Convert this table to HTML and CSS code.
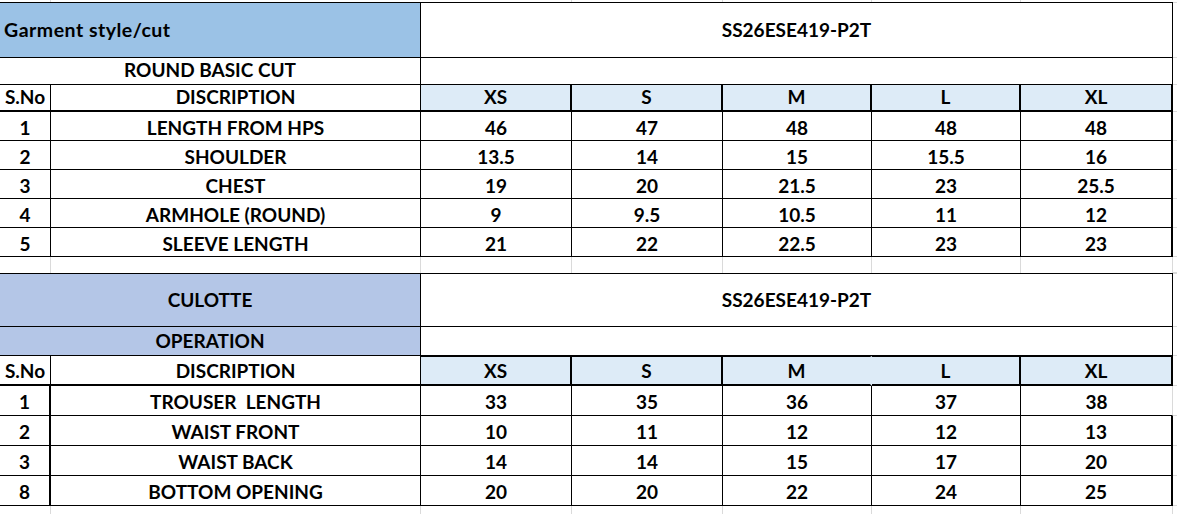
FILE: index.html
```html
<!DOCTYPE html>
<html lang="en">
<head>
<meta charset="utf-8">
<title>Garment spec sheet</title>
<link rel="stylesheet" href="styles.css">
</head>
<body>
<div class="sheet">
  <div class="row strip">
    <div class="g"></div><div></div><div class="g"></div><div class="g"></div><div class="g"></div><div class="g"></div><div></div><div></div>
  </div>

  <!-- Section 1 -->
  <div class="row r-a top">
    <div class="c span2 blue left mid">Garment style/cut</div>
    <div class="c span5 mid">SS26ESE419-P2T</div>
    <div class="stub"></div>
  </div>
  <div class="row r-b">
    <div class="c span2">ROUND BASIC CUT</div>
    <div class="c span5"></div>
    <div class="stub"></div>
  </div>
  <div class="row r-h hdr">
    <div class="c">S.No</div>
    <div class="c">DISCRIPTION</div>
    <div class="c sz">XS</div>
    <div class="c sz">S</div>
    <div class="c sz">M</div>
    <div class="c sz">L</div>
    <div class="c sz">XL</div>
    <div class="stub"></div>
  </div>
  <div class="row r-d">
    <div class="c">1</div><div class="c">LENGTH FROM HPS</div>
    <div class="c">46</div><div class="c">47</div><div class="c">48</div><div class="c">48</div><div class="c rt2">48</div>
    <div class="stub"></div>
  </div>
  <div class="row r-d">
    <div class="c">2</div><div class="c">SHOULDER</div>
    <div class="c">13.5</div><div class="c">14</div><div class="c">15</div><div class="c">15.5</div><div class="c rt2">16</div>
    <div class="stub"></div>
  </div>
  <div class="row r-d">
    <div class="c">3</div><div class="c">CHEST</div>
    <div class="c">19</div><div class="c">20</div><div class="c">21.5</div><div class="c">23</div><div class="c rt2">25.5</div>
    <div class="stub"></div>
  </div>
  <div class="row r-d">
    <div class="c">4</div><div class="c">ARMHOLE (ROUND)</div>
    <div class="c">9</div><div class="c">9.5</div><div class="c">10.5</div><div class="c">11</div><div class="c rt2">12</div>
    <div class="stub"></div>
  </div>
  <div class="row r-d">
    <div class="c">5</div><div class="c">SLEEVE LENGTH</div>
    <div class="c">21</div><div class="c">22</div><div class="c">22.5</div><div class="c">23</div><div class="c rt2">23</div>
    <div class="stub"></div>
  </div>

  <div class="row gap">
    <div class="g"></div><div class="g"></div><div class="g"></div><div class="g"></div><div class="g"></div><div class="g"></div><div class="g"></div><div class="stub"></div>
  </div>

  <!-- Section 2 -->
  <div class="row r-a2 top">
    <div class="c span2 lav mid">CULOTTE</div>
    <div class="c span5 mid">SS26ESE419-P2T</div>
    <div class="stub"></div>
  </div>
  <div class="row r-b2">
    <div class="c span2 lav">OPERATION</div>
    <div class="c span5"></div>
    <div class="stub"></div>
  </div>
  <div class="row r-h2 hdr">
    <div class="c">S.No</div>
    <div class="c">DISCRIPTION</div>
    <div class="c sz sz2">XS</div>
    <div class="c sz sz2">S</div>
    <div class="c sz sz2 nort">M</div>
    <div class="c sz sz2">L</div>
    <div class="c sz sz2">XL</div>
    <div class="stub"></div>
  </div>
  <div class="row r-d2">
    <div class="c sn2">1</div><div class="c">TROUSER&nbsp; LENGTH</div>
    <div class="c">33</div><div class="c">35</div><div class="c">36</div><div class="c">37</div><div class="c rt0">38</div>
    <div class="stub"></div>
  </div>
  <div class="row r-d2">
    <div class="c sn2">2</div><div class="c">WAIST FRONT</div>
    <div class="c">10</div><div class="c">11</div><div class="c">12</div><div class="c">12</div><div class="c rt2">13</div>
    <div class="stub"></div>
  </div>
  <div class="row r-d2">
    <div class="c sn2">3</div><div class="c">WAIST BACK</div>
    <div class="c">14</div><div class="c">14</div><div class="c">15</div><div class="c">17</div><div class="c rt2">20</div>
    <div class="stub"></div>
  </div>
  <div class="row r-d2">
    <div class="c sn2">8</div><div class="c">BOTTOM OPENING</div>
    <div class="c">20</div><div class="c">20</div><div class="c">22</div><div class="c">24</div><div class="c rt2">25</div>
    <div class="stub"></div>
  </div>

  <div class="row bstrip">
    <div class="g"></div><div class="g"></div><div class="g"></div><div class="g"></div><div class="g"></div><div class="g"></div><div class="g"></div><div></div>
  </div>
</div>
</body>
</html>
```

FILE: styles.css
```css
html, body {
  margin: 0;
  padding: 0;
  background: #ffffff;
}

.sheet {
  width: 1177px;
  height: 514px;
  overflow: hidden;
  font-family: Lato, "Liberation Sans", sans-serif;
  font-weight: 700;
  font-size: 19px;
  color: #000;
}

.row {
  display: grid;
  grid-template-columns: 51px 370px 151px 151px 149px 149px 152px 1fr;
}

.row > div {
  box-sizing: border-box;
  min-width: 0;
}

.c {
  border-right: 1px solid #000;
  border-bottom: 1px solid #000;
  display: flex;
  align-items: flex-end;
  justify-content: center;
  line-height: 18px;
  white-space: nowrap;
}

.span2 { grid-column: span 2; }
.span5 { grid-column: span 5; }

.top > .c { border-top: 1px solid #000; }
.top > .stub { border-top: 1px solid #dadada; }

.mid { align-items: center; }
.left {
  justify-content: flex-start;
  padding-left: 4px;
  font-size: 19.5px;
  letter-spacing: 0.5px;
}

.blue { background: #9bc2e6; }
.lav { background: #b4c6e7; }

.stub { border-bottom: 1px solid #dadada; }
.g { border-right: 1px solid #dadada; }

/* row heights */
.strip { height: 2px; }
.r-a { height: 56px; }
.r-b { height: 27px; }
.r-b > .c { padding-bottom: 5px; }
.r-h { height: 27px; }
.r-h > .c { padding-bottom: 4px; }
.r-d { height: 29px; }
.r-d > .c { padding-bottom: 3px; }
.gap { height: 16px; }

.r-a2 { height: 54px; }
.r-b2 { height: 29px; }
.r-b2 > .c { padding-bottom: 5px; }
.r-h2 { height: 30px; }
.r-h2 > .c { padding-bottom: 4px; }
.r-d2 { height: 30px; }
.r-d2 > .c { padding-bottom: 4px; }
.bstrip { height: 9px; }

/* header rows */
.hdr > .c { border-bottom-width: 2px; }
.sz {
  background: #ddebf7;
  border-right-width: 2px;
}
.sz2 { border-top: 1px solid #000; }
.nort { border-right-color: #ddebf7; }

.rt2 { border-right-width: 2px; }
.rt0 { border-right-color: #dadada; }
.sn2 { border-right-width: 2px; }
```
